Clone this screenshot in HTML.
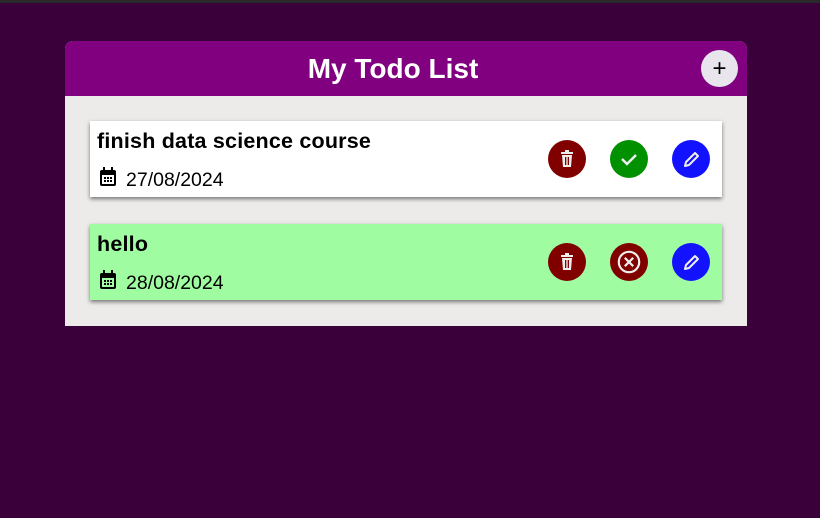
<!DOCTYPE html>
<html><head><style>
body{margin:0;width:820px;height:518px;background:#3a003a;font-family:"Liberation Sans",sans-serif;overflow:hidden;position:relative}
.top{position:absolute;left:0;top:0;width:820px;height:3px;background:#2a2a2a}
.card{position:absolute;left:65px;top:41px;width:682px;height:285px;background:#ecebe9;border-radius:8px 8px 0 0;overflow:hidden}
.hd{height:55px;background:#800080;color:#fff;font-weight:bold;font-size:28px;text-align:center;line-height:55px;position:relative;padding-right:26px}
.plus{position:absolute;left:636px;top:9px;width:37px;height:37px;border-radius:50%;background:#e8e6ec;color:#000;font-size:24px;line-height:37px;font-weight:normal}
.it{position:absolute;left:25px;width:632px;height:76px;box-shadow:0 2px 4px rgba(0,0,0,.5)}
.t{position:absolute;left:7px;top:8px;font-size:21.5px;font-weight:bold;color:#000;letter-spacing:0.2px}
.d{position:absolute;left:9px;top:46px;font-size:19.5px;color:#000}
.d svg{vertical-align:-1px;margin-right:9px}
.b{position:absolute;top:19px;width:38px;height:38px;border-radius:50%}
.b svg{position:absolute;left:9px;top:9px}
</style></head><body>
<div class="top"></div>
<div class="card">
<div class="hd">My Todo List<div class="plus">+</div></div>
<div class="it" style="top:80px;background:#fff">
<div class="t">finish data science course</div>
<div class="d"><svg width="18" height="20" viewBox="0 0 18 20"><rect x="1" y="3" width="16" height="16" rx="2" fill="#000"/><rect x="3" y="8" width="12" height="9" fill="#fff"/><rect x="4" y="0" width="2" height="5" fill="#000"/><rect x="12" y="0" width="2" height="5" fill="#000"/><g fill="#000"><rect x="5" y="10" width="2" height="2"/><rect x="8" y="10" width="2" height="2"/><rect x="11" y="10" width="2" height="2"/><rect x="5" y="13" width="2" height="2"/><rect x="8" y="13" width="2" height="2"/><rect x="11" y="13" width="2" height="2"/></g></svg>27/08/2024</div>
<div class="b" style="left:458px;background:#800000"><svg width="20" height="20" viewBox="0 0 20 20"><rect x="4" y="3" width="12" height="2" fill="#eee"/><rect x="8" y="1" width="4" height="2" fill="#eee"/><path d="M5 6h10l-1 12H6z" fill="#eee"/><rect x="8" y="8" width="1.3" height="8" fill="#800000"/><rect x="10.7" y="8" width="1.3" height="8" fill="#800000"/></svg></div>
<div class="b" style="left:520px;background:#009000"><svg width="20" height="20" viewBox="0 0 20 20"><path d="M3 10l5 5 9-9" stroke="#eee" stroke-width="2.5" fill="none"/></svg></div>
<div class="b" style="left:582px;background:#1212ff"><svg width="20" height="20" viewBox="0 0 20 20"><path d="M4 17l1-4 9-9 3 3-9 9z" stroke="#eee" stroke-width="2" fill="none" stroke-linejoin="round"/></svg></div>
</div>
<div class="it" style="top:183px;background:#a0fca0">
<div class="t">hello</div>
<div class="d"><svg width="18" height="20" viewBox="0 0 18 20"><rect x="1" y="3" width="16" height="16" rx="2" fill="#000"/><rect x="3" y="8" width="12" height="9" fill="#a0fca0"/><rect x="4" y="0" width="2" height="5" fill="#000"/><rect x="12" y="0" width="2" height="5" fill="#000"/><g fill="#000"><rect x="5" y="10" width="2" height="2"/><rect x="8" y="10" width="2" height="2"/><rect x="11" y="10" width="2" height="2"/><rect x="5" y="13" width="2" height="2"/><rect x="8" y="13" width="2" height="2"/><rect x="11" y="13" width="2" height="2"/></g></svg>28/08/2024</div>
<div class="b" style="left:458px;background:#800000"><svg width="20" height="20" viewBox="0 0 20 20"><rect x="4" y="3" width="12" height="2" fill="#eee"/><rect x="8" y="1" width="4" height="2" fill="#eee"/><path d="M5 6h10l-1 12H6z" fill="#eee"/><rect x="8" y="8" width="1.3" height="8" fill="#800000"/><rect x="10.7" y="8" width="1.3" height="8" fill="#800000"/></svg></div>
<div class="b" style="left:520px;background:#800000"><svg width="20" height="20" viewBox="0 0 20 20" style="left:7px;top:7px;width:24px;height:24px"><circle cx="10" cy="10" r="8.5" stroke="#eee" stroke-width="1.8" fill="none"/><path d="M6.5 6.5l7 7M13.5 6.5l-7 7" stroke="#eee" stroke-width="1.8"/></svg></div>
<div class="b" style="left:582px;background:#1212ff"><svg width="20" height="20" viewBox="0 0 20 20"><path d="M4 17l1-4 9-9 3 3-9 9z" stroke="#eee" stroke-width="2" fill="none" stroke-linejoin="round"/></svg></div>
</div>
</div>
</body></html>
